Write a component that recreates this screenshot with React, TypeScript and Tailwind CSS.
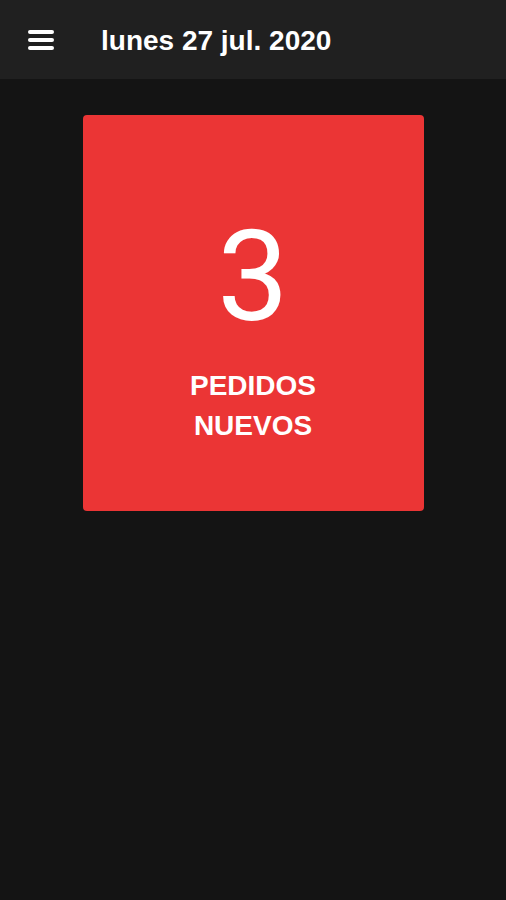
import React from "react";

function MenuIcon() {
  return (
    <svg width="26" height="20" viewBox="0 0 26 20" fill="#ffffff">
      <rect x="0" y="0" width="26" height="4" rx="2" />
      <rect x="0" y="8" width="26" height="4" rx="2" />
      <rect x="0" y="16" width="26" height="4" rx="2" />
    </svg>
  );
}

export default function App() {
  const pedidos = 3;

  return (
    <div className="min-h-[900px] w-full bg-[#141414] font-['Liberation_Sans',Arial,sans-serif] text-white">
      {/* Top bar */}
      <header className="flex h-[79px] items-center bg-[#202020]">
        <button className="ml-[28px] flex items-center">
          <MenuIcon />
        </button>
        <h1 className="ml-[47px] mt-[2px] text-[28px] font-bold leading-none">lunes 27 jul. 2020</h1>
      </header>

      {/* Orders card */}
      <div className="flex justify-center pt-[36px]">
        <div className="flex h-[396px] w-[341px] flex-col items-center rounded-[4px] bg-[#eb3535] pt-[98px]">
          <span className="font-['Roboto',sans-serif] text-[127px] font-normal leading-none">{pedidos}</span>
          <p className="mt-[26px] text-center text-[28px] font-bold leading-[40px]">
            PEDIDOS
            <br />
            NUEVOS
          </p>
        </div>
      </div>
    </div>
  );
}
